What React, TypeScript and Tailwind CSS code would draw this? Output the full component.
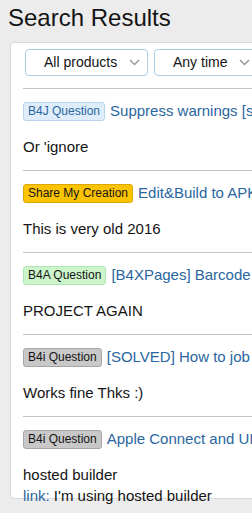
import React from 'react';

type Result = {
    tag: string;
    tagClass: string;
    title: string;
    body: React.ReactNode;
};

const results: Result[] = [
    {
        tag: 'B4J Question',
        tagClass: 'bg-[#deedf9] border-[#b7d5ee] text-[#2a66a0]',
        title: 'Suppress warnings [solved]',
        body: <p>Or 'ignore</p>,
    },
    {
        tag: 'Share My Creation',
        tagClass: 'bg-[#fcc300] border-[#dca800] text-[#141414]',
        title: 'Edit&Build to APK',
        body: <p>This is very old 2016</p>,
    },
    {
        tag: 'B4A Question',
        tagClass: 'bg-[#ccf5cc] border-[#b0e4b0] text-[#141414]',
        title: '[B4XPages] Barcode scanner',
        body: <p>PROJECT AGAIN</p>,
    },
    {
        tag: 'B4i Question',
        tagClass: 'bg-[#c8c8c8] border-[#a6a6a6] text-[#141414]',
        title: '[SOLVED] How to job done',
        body: <p>Works fine Thks :)</p>,
    },
    {
        tag: 'B4i Question',
        tagClass: 'bg-[#c8c8c8] border-[#a6a6a6] text-[#141414]',
        title: 'Apple Connect and UI',
        body: (
            <>
                <p>hosted builder</p>
                <p>
                    <span className="text-[#2a66a0]">link:</span> I'm using hosted builder
                </p>
            </>
        ),
    },
];

function Chevron() {
    return (
        <svg width="11" height="7" viewBox="0 0 11 7" className="ml-[12px]">
            <path d="M1 1l4.5 4.5L10 1" fill="none" stroke="#9a9a9a" strokeWidth="1.5" />
        </svg>
    );
}

function Dropdown({ label, width }: { label: string; width: string }) {
    return (
        <div
            className={`${width} h-[27px] shrink-0 flex items-center pl-[18px] border border-[#a9cfe6] rounded-[4px] bg-white text-[14px] text-[#141414]`}
        >
            <span>{label}</span>
            <Chevron />
        </div>
    );
}

export default function App() {
    return (
        <div
            className="w-[252px] h-[513px] overflow-hidden bg-[#ececec] text-[#141414]"
            style={{ fontFamily: '"Liberation Sans", Arial, sans-serif' }}
        >
            <h1 className="pl-[8px] pt-[2px] h-[42px] text-[24px] leading-[32px] text-[#141414]">Search Results</h1>
            <div className="ml-[10px] w-[400px] bg-white border border-[#dadada] rounded-[4px] pl-[12px] pt-[6px]">
                <div className="flex gap-[6px] pl-[2px] pb-[12px]">
                    <Dropdown label="All products" width="w-[123px]" />
                    <Dropdown label="Any time" width="w-[120px]" />
                </div>
                {results.map((r, i) => (
                    <div key={i} className="border-t border-[#c4c4c4] pt-[11px] h-[82px]">
                        <div className="flex items-center whitespace-nowrap">
                            <span
                                className={`h-[19px] px-[4px] border rounded-[3px] text-[12px] leading-[17px] ${r.tagClass}`}
                            >
                                {r.tag}
                            </span>
                            <span className="ml-[5px] text-[15px] text-[#2a66a0]">{r.title}</span>
                        </div>
                        <div className="mt-[13px] text-[15px] leading-[21px] whitespace-nowrap">{r.body}</div>
                    </div>
                ))}
            </div>
        </div>
    );
}
